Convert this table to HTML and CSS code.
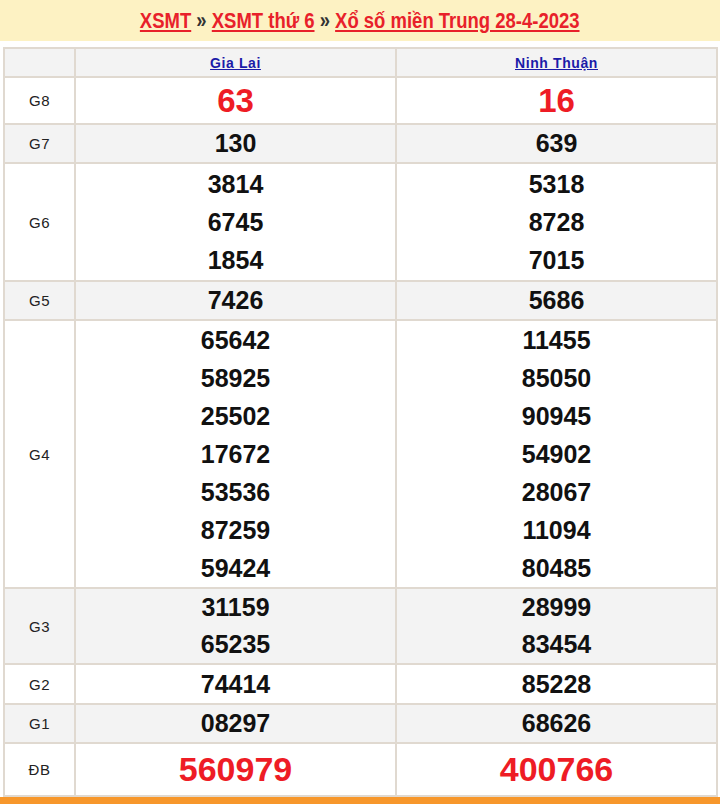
FILE: index.html
```html
<!DOCTYPE html>
<html lang="vi">
<head>
<meta charset="utf-8">
<title>XSMT thứ 6</title>
<link rel="stylesheet" href="styles.css">
</head>
<body>
<div class="crumbs">
  <span class="crumb-line"><a href="#" class="crumb">XSMT</a> <span class="sep">»</span> <a href="#" class="crumb">XSMT thứ 6</a> <span class="sep">»</span> <a href="#" class="crumb">Xổ số miền Trung 28-4-2023</a></span>
</div>
<div class="wrap">
<table class="kq">
  <colgroup><col class="c-label"><col class="c-prov"><col class="c-prov"></colgroup>
  <tr class="head">
    <th></th>
    <th><a href="#" class="prov">Gia Lai</a></th>
    <th><a href="#" class="prov">Ninh Thuận</a></th>
  </tr>
  <tr class="g8">
    <td class="lbl">G8</td>
    <td class="big"><div>63</div></td>
    <td class="big"><div>16</div></td>
  </tr>
  <tr class="alt r39">
    <td class="lbl">G7</td>
    <td class="num"><div>130</div></td>
    <td class="num"><div>639</div></td>
  </tr>
  <tr class="g6">
    <td class="lbl">G6</td>
    <td class="num"><div>3814</div><div>6745</div><div>1854</div></td>
    <td class="num"><div>5318</div><div>8728</div><div>7015</div></td>
  </tr>
  <tr class="alt r37">
    <td class="lbl">G5</td>
    <td class="num"><div>7426</div></td>
    <td class="num"><div>5686</div></td>
  </tr>
  <tr>
    <td class="lbl">G4</td>
    <td class="num"><div>65642</div><div>58925</div><div>25502</div><div>17672</div><div>53536</div><div>87259</div><div>59424</div></td>
    <td class="num"><div>11455</div><div>85050</div><div>90945</div><div>54902</div><div>28067</div><div>11094</div><div>80485</div></td>
  </tr>
  <tr class="alt r37">
    <td class="lbl">G3</td>
    <td class="num"><div>31159</div><div>65235</div></td>
    <td class="num"><div>28999</div><div>83454</div></td>
  </tr>
  <tr>
    <td class="lbl">G2</td>
    <td class="num"><div>74414</div></td>
    <td class="num"><div>85228</div></td>
  </tr>
  <tr class="alt r37">
    <td class="lbl">G1</td>
    <td class="num"><div>08297</div></td>
    <td class="num"><div>68626</div></td>
  </tr>
  <tr class="db">
    <td class="lbl">ĐB</td>
    <td class="big"><div>560979</div></td>
    <td class="big"><div>400766</div></td>
  </tr>
</table>
</div>
<div class="foot"></div>
</body>
</html>
```

FILE: styles.css
```css
html, body {
  margin: 0;
  padding: 0;
  background: #fff;
  font-family: "Liberation Sans", Arial, sans-serif;
}
.crumbs {
  height: 41px;
  background: #fdf2c3;
  display: flex;
  align-items: center;
  justify-content: center;
  overflow: hidden;
}
.crumb-line {
  display: inline-block;
  white-space: nowrap;
  font-size: 22px;
  font-weight: bold;
  color: #e8212a;
  transform: scaleX(0.84);
  transform-origin: center;
  margin-top: 1px;
}
.crumb {
  color: #e8212a;
  text-decoration: underline;
}
.sep {
  color: #333;
}
.wrap {
  padding: 6px 2px 0 3px;
}
.kq {
  width: 100%;
  border-collapse: collapse;
  table-layout: fixed;
}
.c-label { width: 71px; }
.kq th, .kq td {
  border: 2px solid #e0d9d0;
  padding: 0;
  text-align: center;
  vertical-align: middle;
}
.head th {
  background: #f3f3f3;
  height: 27px;
}
.prov {
  color: #1b1ba8;
  font-weight: bold;
  font-size: 14px;
  letter-spacing: 0.6px;
  text-decoration: underline;
}
.alt td { background: #f3f3f3; }
.lbl {
  font-size: 15px;
  letter-spacing: 0.5px;
  color: #222;
}
.num div {
  font-size: 25px;
  font-weight: bold;
  line-height: 38px;
  color: #111;
}
.r39 .num div { line-height: 37px; }
.r37 .num div { line-height: 37px; }
.r37 td { padding: 0; }
.g6 .num { padding: 1px 0; }
.big div {
  font-size: 34px;
  font-weight: bold;
  color: #ee1c25;
}
.g8 td { height: 45px; }
.g8 .big div { font-size: 33px; line-height: 45px; }
.db td { height: 51px; }
.db .big div { line-height: 51px; }
.foot {
  height: 7px;
  background: #f7972b;
}
```
